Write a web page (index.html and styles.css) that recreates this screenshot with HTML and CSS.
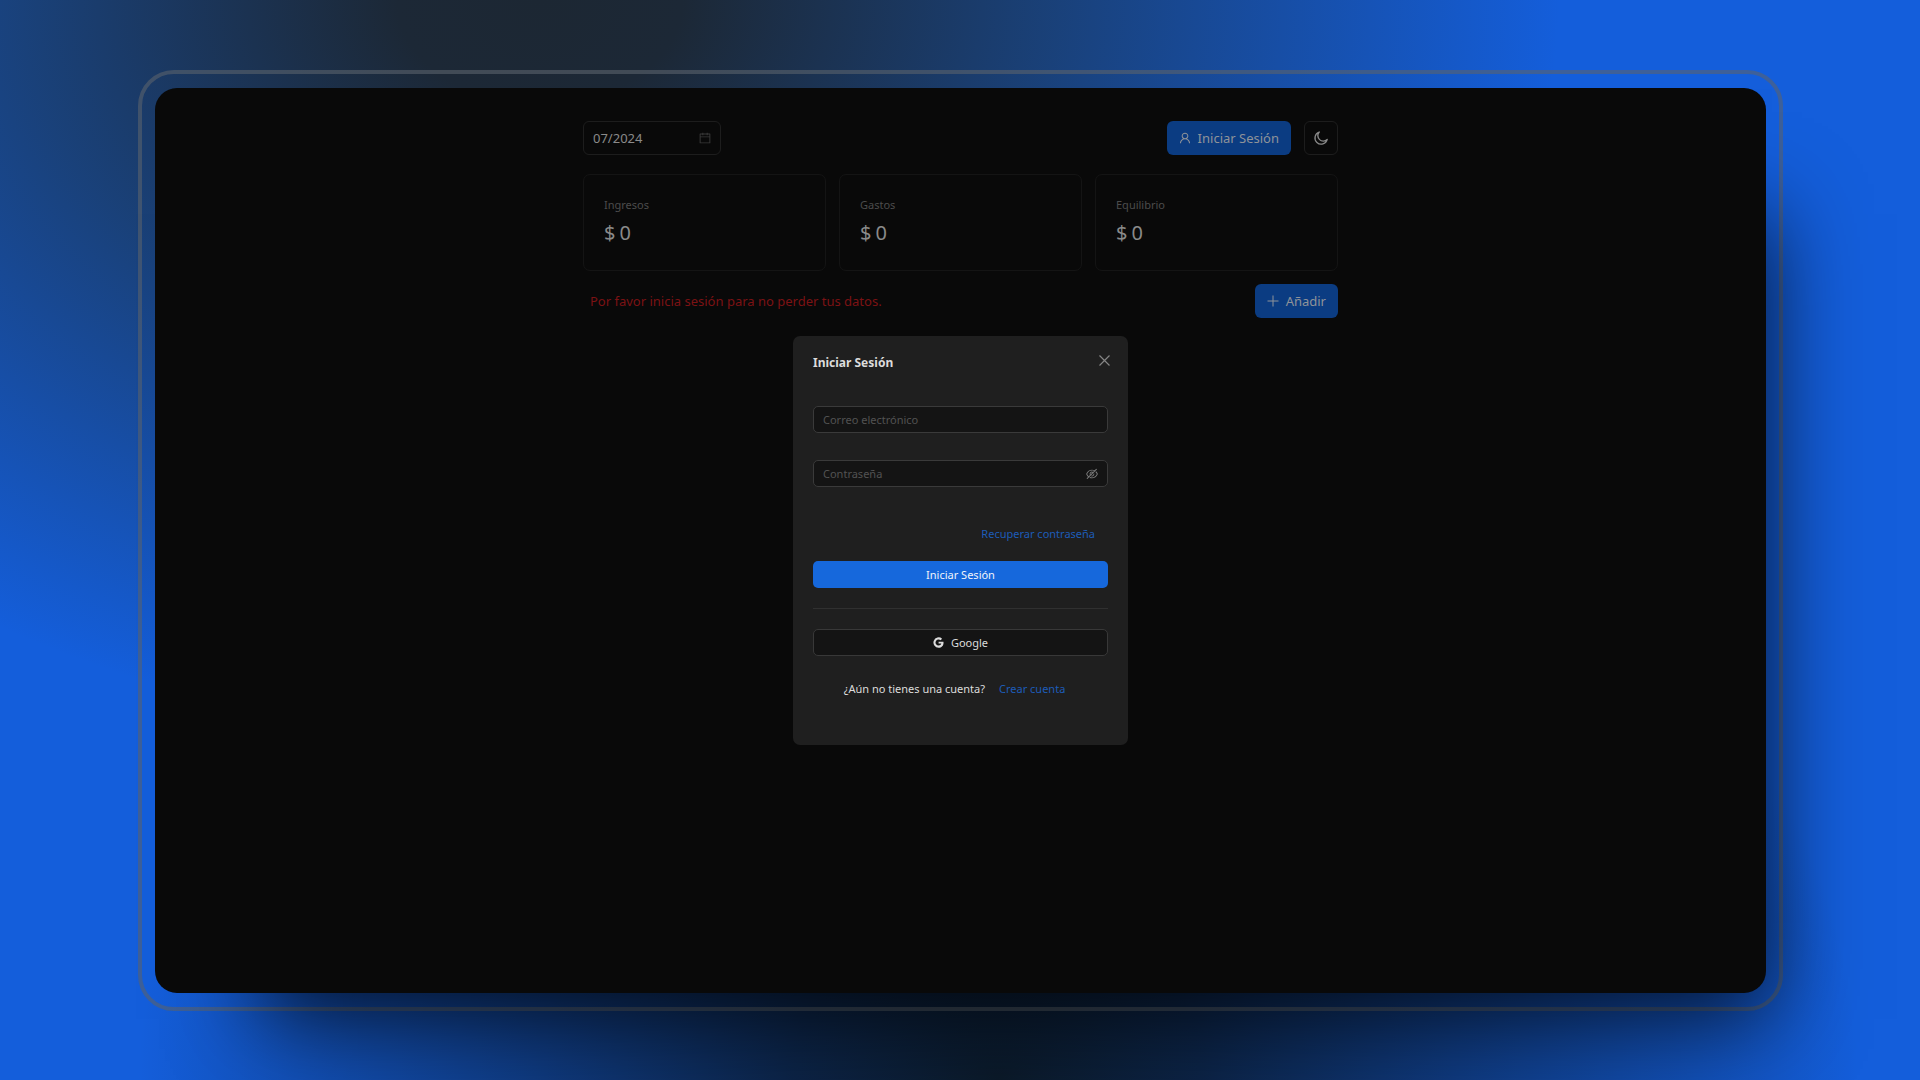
FILE: index.html
```html
<!DOCTYPE html>
<html lang="es">
<head>
<meta charset="utf-8">
<meta name="viewport" content="width=device-width, initial-scale=1">
<title>Iniciar Sesión</title>
<link rel="stylesheet" href="styles.css">
</head>
<body>
<div class="frame">
  <div class="screen">
    <main class="app">
      <header class="toolbar">
        <label class="month">
          <input class="month-input" type="text" value="07/2024" aria-label="Mes">
          <svg class="icon" viewBox="64 64 896 896" fill="currentColor" aria-hidden="true"><path d="M880 184H712v-64c0-4.400-3.600-8-8-8h-56c-4.400 0-8 3.600-8 8v64H384v-64c0-4.400-3.600-8-8-8h-56c-4.400 0-8 3.600-8 8v64H144c-17.700 0-32 14.300-32 32v664c0 17.700 14.300 32 32 32h736c17.700 0 32-14.300 32-32V216c0-17.700-14.300-32-32-32zm-40 656H184V460h656v380zM184 392V256h128v48c0 4.400 3.600 8 8 8h56c4.400 0 8-3.600 8-8v-48h256v48c0 4.400 3.600 8 8 8h56c4.400 0 8-3.600 8-8v-48h128v136H184z"/></svg>
        </label>
        <div class="actions">
          <button class="btn btn-dim" type="button">
            <svg class="icon" viewBox="64 64 896 896" fill="currentColor" aria-hidden="true"><path d="M858.500 763.600a374 374 0 00-80.600-119.500 375.630 375.630 0 00-119.500-80.600c-.4-.2-.8-.3-1.200-.5C719.500 518 760 444.700 760 362c0-137-111-248-248-248S264 225 264 362c0 82.700 40.500 156 102.800 201.100-.4.2-.8.3-1.200.5-44.800 18.900-85 46-119.500 80.600a375.630 375.630 0 00-80.600 119.500A371.700 371.700 0 00136 901.800a8 8 0 008 8.200h60c4.400 0 7.900-3.500 8-7.800 2-77.200 33-149.500 87.800-204.300 56.700-56.700 132-87.900 212.200-87.900s155.500 31.200 212.200 87.900C779 752.700 810 825 812 902.200c.1 4.400 3.600 7.800 8 7.800h60a8 8 0 008-8.200c-1-47.800-10.900-94.300-29.500-138.200zM512 534c-45.900 0-89.100-17.900-121.600-50.400S340 407.900 340 362c0-45.900 17.900-89.100 50.400-121.600S466.100 190 512 190s89.100 17.900 121.600 50.400S684 316.100 684 362c0 45.900-17.900 89.100-50.400 121.600S557.900 534 512 534z"/></svg>
            Iniciar Sesión
          </button>
          <button class="theme" type="button" aria-label="Tema oscuro">
            <svg class="icon-moon" viewBox="0 0 16 16" fill="none" stroke="currentColor" stroke-width="1.300" stroke-linejoin="round" aria-hidden="true"><path d="M6.300 2A6.200 6.200 0 1 0 14.200 9.400A5.200 5.200 0 0 1 6.300 2Z"/></svg>
          </button>
        </div>
      </header>
      <section class="cards">
        <article class="card"><h2 class="card-title">Ingresos</h2><p class="card-value"><span>$</span><span>0</span></p></article>
        <article class="card"><h2 class="card-title">Gastos</h2><p class="card-value"><span>$</span><span>0</span></p></article>
        <article class="card"><h2 class="card-title">Equilibrio</h2><p class="card-value"><span>$</span><span>0</span></p></article>
      </section>
      <div class="notice-row">
        <p class="notice">Por favor inicia sesión para no perder tus datos.</p>
        <button class="btn btn-dim" type="button">
          <svg class="icon" viewBox="0 0 12 12" fill="none" stroke="currentColor" aria-hidden="true"><path d="M6 0.500V11.500M0.500 6H11.500"/></svg>
          Añadir
        </button>
      </div>
    </main>
    <div class="overlay">
      <section class="modal" role="dialog" aria-labelledby="modal-title">
        <header class="modal-head">
          <h1 class="modal-title" id="modal-title">Iniciar Sesión</h1>
          <button class="close" type="button" aria-label="Cerrar">
            <svg class="icon-close" viewBox="0 0 11 11" fill="none" stroke="currentColor" stroke-width="1.200" aria-hidden="true"><path d="M0.500 0.500L10.500 10.500M10.500 0.500L0.500 10.500"/></svg>
          </button>
        </header>
        <form class="form">
          <div class="field"><input class="field-input" type="email" placeholder="Correo electrónico" aria-label="Correo electrónico"></div>
          <div class="field">
            <input class="field-input" type="password" placeholder="Contraseña" aria-label="Contraseña">
            <button class="reveal" type="button" aria-label="Mostrar contraseña">
              <svg class="icon" viewBox="64 64 896 896" fill="currentColor" aria-hidden="true"><path d="M942.200 486.200Q889.470 375.110 816.700 305l-50.880 50.880C807.310 395.530 843.450 447.400 874.700 512 791.500 684.200 673.400 766 512 766q-72.670 0-133.870-22.380L323 798.750Q408 838 512 838q288.300 0 430.200-300.300a60.290 60.290 0 000-51.500zm-63.570-320.640L836 122.880a8 8 0 00-11.320 0L715.310 232.200Q624.860 186 512 186q-288.300 0-430.200 300.300a60.300 60.300 0 000 51.500q56.690 119.400 136.500 191.410L112.480 835a8 8 0 000 11.310L155.170 889a8 8 0 0011.310 0l712.150-712.120a8 8 0 000-11.320zM149.300 512C232.600 339.800 350.700 258 512 258c54.540 0 104.130 9.360 149.120 28.390l-70.300 70.300a176 176 0 00-238.130 238.130l-83.420 83.420C223.100 637.490 183.300 582.280 149.300 512zm246.700 0a112.110 112.110 0 01146.200-106.690L401.310 546.200A112 112 0 01396 512z"/><path d="M508 624c-3.460 0-6.870-.16-10.250-.47l-52.820 52.820a176.090 176.090 0 00227.420-227.420l-52.820 52.820c.31 3.380.47 6.790.47 10.250a111.940 111.940 0 01-112 112z"/></svg>
            </button>
          </div>
          <a class="link recover" href="#recuperar">Recuperar contraseña</a>
          <button class="submit" type="submit">Iniciar Sesión</button>
        </form>
        <hr class="divider">
        <button class="google" type="button">
          <svg class="icon-google" viewBox="0 0 24 24" fill="currentColor" aria-hidden="true"><path d="M12.200 10.100V14.300H18.100C17.500 16.900 15.400 18.700 12.300 18.700A6.700 6.700 0 1 1 16.600 6.900L19.800 3.800A11.200 11.200 0 1 0 12.300 23.200C18.700 23.200 23 18.800 23 12.300C23 11.500 22.900 10.800 22.800 10.100Z"/></svg>
          Google
        </button>
        <p class="signup">¿Aún no tienes una cuenta? <a class="link" href="#crear">Crear cuenta</a></p>
      </section>
    </div>
  </div>
</div>
</body>
</html>
```
FILE: styles.css
```css
* { box-sizing: border-box; }

body {
  margin: 0;
  min-height: 100vh;
  padding: 70px 137px 69px 138px;
  display: flex;
  font-family: "Noto Sans", "Open Sans", sans-serif;
  font-size: 11px;
  line-height: 20px;
  color: #dcdcdc;
  background:
    radial-gradient(ellipse 1020px 740px at 540px 0, #1c2733 0%, #1c2836 14%, rgba(26, 62, 112, .92) 50%, rgba(20, 94, 221, 0) 100%),
    radial-gradient(ellipse 860px 700px at 52% 100%, #0b1a2a 0%, rgba(11, 30, 56, .9) 24%, rgba(20, 94, 221, 0) 100%),
    #145edb;
}

h1, h2, p { margin: 0; font-weight: 400; }

button, input { font: inherit; color: inherit; }

button {
  display: inline-flex;
  align-items: center;
  justify-content: center;
  padding: 0;
  border: 0;
  background: none;
  cursor: pointer;
}

.frame {
  flex: 1;
  display: flex;
  padding: 14px 13px;
  border: 4px solid rgba(90, 99, 108, .6);
  border-radius: 36px;
}

.screen {
  position: relative;
  flex: 1;
  padding: 33px 24px;
  border-radius: 22px;
  background: #090909;
  box-shadow: 56px 76px 84px -50px rgba(0, 0, 0, .72);
}

.app {
  max-width: 755px;
  margin: 0 auto;
  display: flex;
  flex-direction: column;
  color: #8a8a8a;
}

.toolbar, .actions, .notice-row {
  display: flex;
  align-items: center;
}

.toolbar, .notice-row { justify-content: space-between; }

.actions { gap: 13px; }

.icon { width: 12px; height: 12px; flex: none; }

.month {
  display: flex;
  align-items: center;
  width: 138px;
  height: 34px;
  padding: 0 9px;
  border: 1px solid #1d1d1d;
  border-radius: 6px;
  color: #3a3a3a;
}

.month-input {
  flex: 1;
  min-width: 0;
  padding: 0;
  border: 0;
  outline: 0;
  background: none;
  font-size: 13px;
  color: #8a8a8a;
}

.btn {
  height: 34px;
  gap: 7px;
  padding: 0 12px;
  border-radius: 6px;
  font-size: 13px;
}

.btn-dim { background: #0b3c82; color: #8f9399; }

.theme {
  width: 34px;
  height: 34px;
  border: 1px solid #1d1d1d;
  border-radius: 6px;
}

.icon-moon { width: 16px; height: 16px; }

.cards {
  display: grid;
  grid-template-columns: repeat(3, 1fr);
  gap: 13px;
  margin: 19px 0 13px;
}

.card {
  height: 97px;
  padding: 20px;
  border: 1px solid #141414;
  border-radius: 7px;
}

.card-title { font-size: 11px; line-height: 20px; color: #4c4c4c; }

.card-value {
  display: flex;
  gap: 4px;
  padding-top: 4px;
  font-size: 20px;
  line-height: 28px;
}

.notice { padding-left: 7px; font-size: 13px; color: #7c1214; }

.overlay {
  position: absolute;
  inset: 0;
  display: flex;
  align-items: center;
  justify-content: center;
}

.modal {
  width: 335px;
  height: 409px;
  padding: 17px 20px;
  border-radius: 7px;
  background: #1f1f1f;
}

.modal-head {
  display: flex;
  align-items: start;
  justify-content: space-between;
}

.modal-title { font-size: 12px; line-height: 20px; font-weight: 700; }

.close { width: 11px; height: 14px; color: #858585; margin-right: -2px; }

.icon-close { width: 11px; height: 11px; }

.form { display: flex; flex-direction: column; padding-top: 33px; }

.field {
  display: flex;
  align-items: center;
  height: 27px;
  margin-bottom: 27px;
  padding: 0 9px;
  border: 1px solid #3a3a3a;
  border-radius: 5px;
  background: #141414;
}

.field-input {
  flex: 1;
  min-width: 0;
  padding: 0;
  border: 0;
  outline: 0;
  background: none;
}

.field-input::placeholder { color: #525252; opacity: 1; }

.reveal { color: #7c7c7c; }

.link { color: #1d5cb8; text-decoration: none; }

.recover { align-self: flex-end; margin: 10px 13px 17px 0; }

.submit {
  height: 27px;
  border-radius: 5px;
  background: #1668dc;
  color: #f0f4fa;
}

.divider {
  height: 1px;
  margin: 20px 0;
  border: 0;
  background: #303030;
}

.google {
  width: 100%;
  height: 27px;
  gap: 7px;
  border: 1px solid #383838;
  border-radius: 5px;
  background: #141414;
}

.icon-google { width: 11px; height: 11px; }

.signup {
  display: flex;
  justify-content: center;
  gap: 14px;
  padding: 23px 12px 0 0;
}
```
